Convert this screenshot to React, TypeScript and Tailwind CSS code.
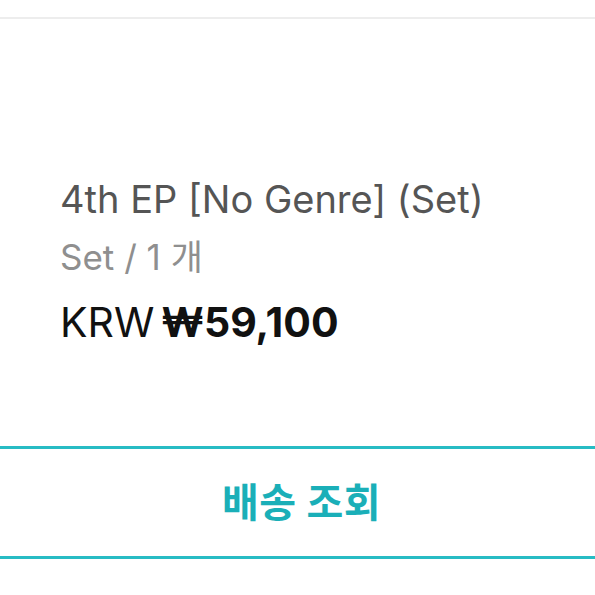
export default function App() {
  return (
    <div
      className="h-[595px] w-[595px] overflow-hidden bg-white"
      style={{ fontFamily: 'Inter, "Noto Sans CJK KR", sans-serif' }}
    >
      <div className="h-[17px]" />
      <div className="h-[2px] bg-[#ededed]" />
      <div className="px-[60px] pt-[158px]">
        <p className="text-[38px] leading-[44px] text-[#555555]">
          4th EP [No Genre] (Set)
        </p>
        <p className="mt-[16px] text-[35px] leading-[40px] text-[#8f8f8f]">
          Set / 1 개
        </p>
        <p className="mt-[22px] flex items-baseline gap-[7px] text-[41px] leading-[46px] text-[#111111]">
          <span>KRW</span>
          <span className="font-bold">₩59,100</span>
        </p>
      </div>
      <div className="mt-[101px] flex h-[113px] items-center justify-center border-y-[3px] border-[#27bcc4] pl-[8px]">
        <span className="text-[40px] font-bold tracking-[0.5px] text-[#1aafb8]">
          배송 조회
        </span>
      </div>
    </div>
  );
}
